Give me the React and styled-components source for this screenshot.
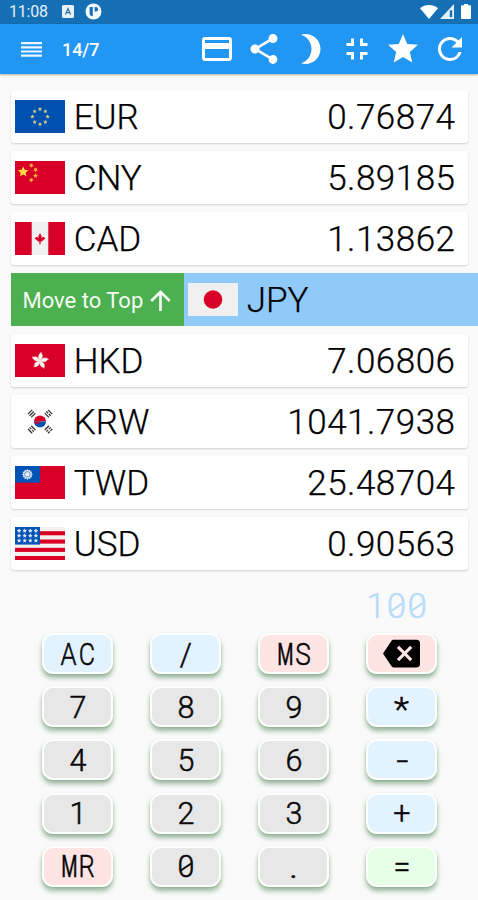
import React from 'react';
import styled, { createGlobalStyle } from 'styled-components';
import {
  MdPayment,
  MdShare,
  MdBrightness3,
  MdFullscreenExit,
  MdStar,
  MdRefresh,
  MdBackspace,
} from 'react-icons/md';

const GlobalStyle = createGlobalStyle`
  * { box-sizing: border-box; }
  body {
    margin: 0;
    background: #fafafa;
    font-family: Roboto, "Liberation Sans", sans-serif;
  }
`;

const Screen = styled.div`
  width: 478px;
  height: 900px;
  overflow: hidden;
  display: flex;
  flex-direction: column;
  background: #fafafa;
`;

const StatusBar = styled.div`
  height: 24px;
  flex-shrink: 0;
  display: flex;
  align-items: center;
  padding: 0 6px 1px 9px;
  background: #156fb4;
  color: #e4f0fa;
`;

const Clock = styled.span`
  width: 53px;
  font-size: 16px;
  line-height: 22px;
  letter-spacing: -0.2px;
`;

const StatusIcons = styled.div`
  display: flex;
  align-items: center;
  gap: ${({ $gap }) => $gap}px;
  margin-left: ${({ $right }) => ($right ? 'auto' : '0')};
`;

const AppBar = styled.header`
  height: 50px;
  flex-shrink: 0;
  display: flex;
  align-items: center;
  padding: 0 10px 0 21px;
  background: #2196f3;
  color: #fff;
  box-shadow: 0 1px 2px rgba(0, 0, 0, 0.3);
`;

const Count = styled.span`
  margin-left: 20px;
  font-size: 18px;
  font-weight: 500;
  letter-spacing: -0.1px;
`;

const Actions = styled.div`
  margin-left: auto;
  display: flex;
  gap: 10.6px;
  font-size: 36px;

  svg { display: block; }
`;

const List = styled.div`
  display: flex;
  flex-direction: column;
  gap: 8px;
  padding: 16px 0 0 11px;
`;

const Card = styled.div`
  height: 53px;
  width: 457px;
  display: flex;
  align-items: center;
  padding: 0 12.5px 0 4.3px;
  background: #fff;
  border-radius: 3px;
  box-shadow: 0 1px 2px rgba(0, 0, 0, 0.17);
`;

const SwipedRow = styled.div`
  height: 53px;
  display: flex;
`;

const MoveButton = styled.div`
  width: 173px;
  display: flex;
  align-items: center;
  padding: 1px 0 0 11.5px;
  background: #4caf50;
  color: #f4fbf4;
  font-size: 22px;
  white-space: nowrap;

  svg { margin-left: 7px; }
`;

const SwipedContent = styled.div`
  flex: 1;
  display: flex;
  align-items: center;
  padding-left: 4.4px;
  background: #90caf9;
`;

const Flag = styled.svg`
  width: 50px;
  height: 33px;
  flex-shrink: 0;
`;

const Code = styled.span`
  margin-left: 8.4px;
  padding-top: 1px;
  font-size: 35px;
  font-weight: 300;
  -webkit-text-stroke: 0.25px currentColor;
  color: #000;
`;

const Rate = styled.span`
  margin-left: auto;
  padding-top: 1px;
  font-size: 35px;
  font-weight: 300;
  letter-spacing: 0.5px;
  -webkit-text-stroke: 0.25px currentColor;
  color: #000;
`;

const Display = styled.div`
  height: 63px;
  flex-shrink: 0;
  display: flex;
  justify-content: flex-end;
  align-items: center;
  padding: 10px 50.5px 0 0;
  color: #b9dcfa;
  font-size: 35px;
  line-height: 40px;
`;

const Keypad = styled.div`
  display: grid;
  grid-template-columns: repeat(4, 71px);
  grid-auto-rows: 41px;
  column-gap: 37px;
  row-gap: 12.2px;
  padding-left: 42.4px;
`;

const tones = {
  digit: '#e7e7e7',
  operator: '#e3f2ff',
  memory: '#ffe4e4',
  equals: '#e6ffe6',
};

const Key = styled.div`
  display: flex;
  align-items: center;
  justify-content: center;
  padding-top: ${({ $icon }) => ($icon ? 0 : 2)}px;
  border: 2px solid #fcfffc;
  border-radius: 11px;
  background: ${({ $tone }) => tones[$tone]};
  box-shadow: 0 4px 5px rgba(46, 110, 55, 0.46), 0 1px 2px rgba(60, 110, 60, 0.15);
  color: #080808;
  font-size: 30.5px;
  line-height: 36px;
`;

// fixed-width character cell, so every glyph takes the same advance
const Cell = styled.span`
  position: relative;
  display: inline-flex;
  justify-content: center;
  width: 0.59em;
`;

const Glyph = styled.span`
  font-weight: ${({ $weight }) => $weight || 300};
  -webkit-text-stroke: 0.5px currentColor;
  transform: translateY(${({ $dy }) => $dy || 0}px) scale(${({ $sx }) => $sx || 1}, ${({ $sy }) => $sy || 1});
`;

const Slash = styled.i`
  position: absolute;
  left: 50%;
  top: 50%;
  width: 0.44em;
  height: 2px;
  background: currentColor;
  transform: translate(-50%, -50%) rotate(-34deg);
`;

const shapes = {
  A: { $sx: 0.84 },
  C: { $sx: 0.82 },
  M: { $sx: 0.61, $weight: 400 },
  S: { $sx: 0.86 },
  R: { $sx: 0.84 },
  '*': { $dy: 2, $sx: 1.15, $sy: 1.1 },
  '-': { $sx: 1.4 },
  '.': { $sx: 1.25, $sy: 1.1 },
};

const Mono = ({ text }) =>
  text.split('').map((ch, i) => (
    <Cell key={i}>
      <Glyph {...shapes[ch]}>{ch}</Glyph>
      {ch === '0' && <Slash />}
    </Cell>
  ));

const star = (cx, cy, r, turn = 0) =>
  Array.from({ length: 10 }, (_, i) => {
    const a = ((i * 36 - 90 + turn) * Math.PI) / 180;
    const d = i % 2 ? r * 0.48 : r;
    return `${(cx + d * Math.cos(a)).toFixed(2)},${(cy + d * Math.sin(a)).toFixed(2)}`;
  }).join(' ');

const flags = {
  EUR: (
    <>
      <rect width="50" height="33" fill="#0050b0" />
      {[0, 45, 90, 135, 180, 225, 270, 315].map((a) => (
        <polygon
          key={a}
          points={star(25 + 7.6 * Math.cos((a * Math.PI) / 180), 16.7 + 7.6 * Math.sin((a * Math.PI) / 180), 2.2)}
          fill="#d8cf86"
        />
      ))}
    </>
  ),
  CNY: (
    <>
      <rect width="50" height="33" fill="#d80027" />
      <polygon points={star(8.2, 10.9, 5.5)} fill="#ffda44" />
      <polygon points={star(16.3, 4.4, 2.6, 20)} fill="#f7ae3c" />
      <polygon points={star(20.6, 8.8, 2.6, 40)} fill="#f7ae3c" />
      <polygon points={star(20.6, 14.7, 2.6)} fill="#f7ae3c" />
      <polygon points={star(16.3, 19, 2.6, 20)} fill="#f7ae3c" />
    </>
  ),
  CAD: (
    <>
      <rect width="50" height="33" fill="#f0f0f0" />
      <rect width="16.7" height="33" fill="#d80027" />
      <rect x="33.3" width="16.7" height="33" fill="#d80027" />
      <path
        d="M25 11.2l1.7 2.7-.3 2 2-1.1 2 1.5-3.3 3-1.5.4v2.5h-1.2v-2.5l-1.5-.4-3.300-3 2-1.500 2 1.100-.3-2z"
        fill="#d80027"
      />
    </>
  ),
  JPY: (
    <>
      <rect width="50" height="33" fill="#f0f0f0" />
      <circle cx="25" cy="16.5" r="9.3" fill="#d80027" />
    </>
  ),
  HKD: (
    <>
      <rect width="50" height="33" fill="#d80027" />
      {[12, 84, 156, 228, 300].map((a) => (
        <path
          key={a}
          d="M25 16.7c-2.5-1.7-3.4-5.8-.5-8.6.1 1.7 2.3 2.1 2 4.7-.2 1.4-1.5 2.3-1.5 3.900z"
          fill="#f7f2f2"
          stroke="#f7f2f2"
          strokeWidth="0.4"
          transform={`rotate(${a} 25 16.7)`}
        />
      ))}
    </>
  ),
  KRW: (
    <>
      <path d="M19 16.5a6 6 0 0 1 12 0z" fill="#d80027" />
      <path d="M19 16.5a6 6 0 0 0 12 0z" fill="#0052b4" />
      <path d="M19 16.5a3 2.2 0 0 0 6 0z" fill="#d80027" />
      {[
        [16.7, 8.6, -45],
        [33.5, 8.6, 45],
        [16.7, 24.5, 45],
        [33.5, 24.5, -45],
      ].map(([x, y, a], n) => (
        <g key={n} transform={`translate(${x} ${y}) rotate(${a})`} stroke="#333" strokeWidth="1.3">
          <path d="M-3 -2.3H3" />
          <path d="M-3 0H3" strokeDasharray={n ? '2.5 1' : 'none'} />
          <path d="M-3 2.3H3" strokeDasharray={n === 3 ? '2.5 1' : 'none'} />
        </g>
      ))}
    </>
  ),
  TWD: (
    <>
      <rect width="50" height="33" fill="#d80027" />
      <rect width="25" height="16.7" fill="#0052b4" />
      <polygon
        points={Array.from({ length: 24 }, (_, i) => {
          const a = (i * Math.PI) / 12;
          const d = i % 2 ? 4.1 : 5.5;
          return `${12.4 + d * Math.sin(a)},${8.4 - d * Math.cos(a)}`;
        }).join(' ')}
        fill="#e8eef7"
      />
      <circle cx="12.4" cy="8.4" r="2.8" fill="#e8eef7" stroke="#4a82c6" strokeWidth="0.9" />
    </>
  ),
  USD: (
    <>
      <rect width="50" height="33" fill="#f4f0f0" />
      {[4.2, 12.5, 20.8, 29].map((y) => (
        <rect key={y} y={y} width="50" height="4.1" fill="#d80027" />
      ))}
      <rect width="25" height="17.6" fill="#0052b4" />
      {[3.8, 8.7, 13.6].map((y) =>
        [4.1, 9.7, 15.3, 20.9].map((x) => <polygon key={`${x}-${y}`} points={star(x, y, 2.4)} fill="#dce6f2" />)
      )}
    </>
  ),
};

const CurrencyFlag = ({ code }) => <Flag viewBox="0 0 50 33">{flags[code]}</Flag>;

const rates = [
  { code: 'EUR', rate: '0.76874' },
  { code: 'CNY', rate: '5.89185' },
  { code: 'CAD', rate: '1.13862' },
  { code: 'JPY', swiped: true },
  { code: 'HKD', rate: '7.06806' },
  { code: 'KRW', rate: '1041.7938' },
  { code: 'TWD', rate: '25.48704' },
  { code: 'USD', rate: '0.90563' },
];

const keys = [
  ['AC', 'operator'], ['/', 'operator'], ['MS', 'memory'], ['back', 'memory'],
  ['7', 'digit'], ['8', 'digit'], ['9', 'digit'], ['*', 'operator'],
  ['4', 'digit'], ['5', 'digit'], ['6', 'digit'], ['-', 'operator'],
  ['1', 'digit'], ['2', 'digit'], ['3', 'digit'], ['+', 'operator'],
  ['MR', 'memory'], ['0', 'digit'], ['.', 'digit'], ['=', 'equals'],
];

const App = () => {
  return (
    <Screen>
      <GlobalStyle />
      <StatusBar>
        <Clock>11:08</Clock>
        <StatusIcons $gap={10.5}>
          <svg width="12" height="13" viewBox="0 0 12 13">
            <rect width="12" height="13" rx="1.5" fill="#e8f2fa" />
            <path d="M3.4 9.5L6 3.6l2.6 5.9M4.4 7.7h3.2" fill="none" stroke="#35749f" strokeWidth="1.3" />
          </svg>
          <svg width="17" height="17" viewBox="0 0 17 17">
            <circle cx="8.5" cy="8.5" r="8" fill="#f4f9fd" />
            <path d="M4.6 4h3.2v9.3a5.5 5.5 0 0 1-3.2-1.8zM9.6 4h1.2a2.3 2.3 0 0 1 0 4.6H9.6z" fill="#156fb4" />
          </svg>
        </StatusIcons>
        <StatusIcons $gap={2} $right>
          <svg width="18" height="14" viewBox="0 0 18 14">
            <path d="M0 3.2C5-1 13-1 18 3.2L9 14z" fill="#fff" />
          </svg>
          <svg width="14" height="15" viewBox="0 0 14 15">
            <path d="M14 0v15H0z" fill="#e4f0fa" />
            <path d="M9.8 6.3h2.4v6.9H9.8z" fill="#156fb4" />
          </svg>
          <svg width="16" height="15" viewBox="0 0 16 15">
            <path d="M6 1.3h2V0h4v1.3h2c.6 0 1 .4 1 1V14c0 .6-.4 1-1 1H6c-.6 0-1-.4-1-1V2.3c0-.6.4-1 1-1z" fill="#fff" />
          </svg>
        </StatusIcons>
      </StatusBar>
      <AppBar>
        <svg width="21" height="15" viewBox="0 0 21 15" fill="#edf7ff">
          <path d="M0 0h21v2.2H0zM0 4.2h21v2.2H0zM0 8.4h21v2.2H0zM0 12.6h21v2.2H0z" />
        </svg>
        <Count>14/7</Count>
        <Actions>
          <MdPayment />
          <MdShare />
          <MdBrightness3 />
          <MdFullscreenExit />
          <MdStar />
          <MdRefresh />
        </Actions>
      </AppBar>
      <List>
        {rates.map(({ code, rate, swiped }) =>
          swiped ? (
            <SwipedRow key={code}>
              <MoveButton>
                Move to Top
                <svg width="21" height="21" viewBox="0 0 21 21" fill="none" stroke="currentColor" strokeWidth="2.7">
                  <path d="M1.200 11l9.300-9.100 9.300 9.100M10.500 2v19" />
                </svg>
              </MoveButton>
              <SwipedContent>
                <CurrencyFlag code={code} />
                <Code>{code}</Code>
              </SwipedContent>
            </SwipedRow>
          ) : (
            <Card key={code}>
              <CurrencyFlag code={code} />
              <Code>{code}</Code>
              <Rate>{rate}</Rate>
            </Card>
          )
        )}
      </List>
      <Display>
        <Mono text="100" />
      </Display>
      <Keypad>
        {keys.map(([label, tone]) => (
          <Key key={label} $tone={tone} $icon={label === 'back'}>
            {label === 'back' ? <MdBackspace size={37} color="#000" /> : <Mono text={label} />}
          </Key>
        ))}
      </Keypad>
    </Screen>
  );
};

export default App;
